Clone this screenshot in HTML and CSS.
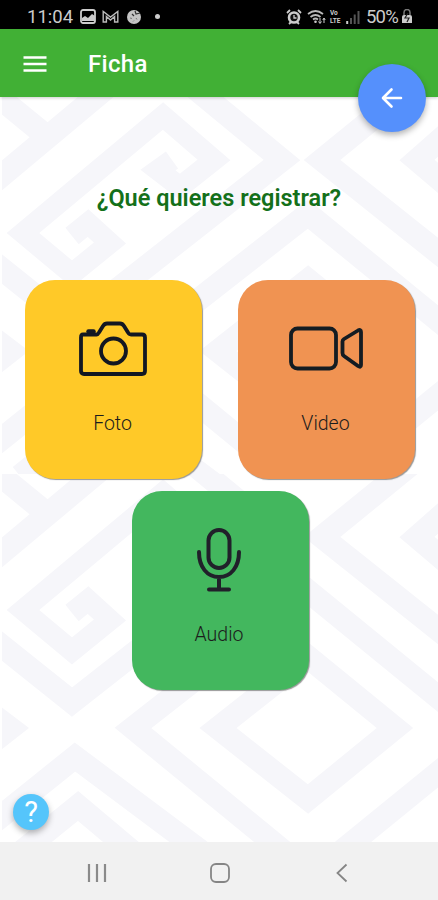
FILE: index.html
```
<!DOCTYPE html>
<html lang="es">
<head>
  <meta charset="UTF-8" />
  <meta name="viewport" content="width=device-width, initial-scale=1.0" />
  <title>Ficha</title>
  <link rel="stylesheet" href="styles.css">
</head>
<body>
  <div class="status-bar">
    <div class="status-left">
      <span class="clock">11:04</span>
      <svg class="st-image" width="16" height="15" viewBox="0 0 16 15">
        <rect x="1" y="1" width="14" height="13" rx="2" fill="none" stroke="#ccc" stroke-width="1.8"/>
        <path d="M2 12V9l3-2 3 2 4-4 3 2v5z" fill="#ccc"/>
      </svg>
      <svg class="st-mail" width="17" height="13" viewBox="0 0 17 13">
        <path d="M1.2 12V1.5L8.5 7l7.3-5.5V12h-3.2V6.5L8.5 10 4.4 6.500V12z" fill="none" stroke="#bbb" stroke-width="1.4"/>
      </svg>
      <svg class="st-ball" width="16" height="16" viewBox="0 0 16 16">
        <circle cx="8" cy="8" r="7" fill="#c4c4c4"/>
        <path d="M6 5l2 2M9 2l1 3 4-1" stroke="#333" stroke-width="1.200" fill="none"/>
        <path d="M4 9l2 .5M10 9l1 1.500M7 12.500l1-1" stroke="#777" stroke-width="1" fill="none"/>
      </svg>
      <span class="dot"></span>
    </div>
    <div class="status-right">
      <svg width="16" height="16" viewBox="0 0 16 16">
        <path d="M1 4l3-3M15 4l-3-3M3 15l2-2M13 15l-2-2" stroke="#ccc" stroke-width="1.8"/>
        <circle cx="8" cy="8.500" r="5" fill="#111" stroke="#ccc" stroke-width="2.600"/>
        <path d="M8 6v3h2.500" fill="none" stroke="#ccc" stroke-width="1.300"/>
      </svg>
      <svg class="st-wifi" width="19" height="16" viewBox="0 0 19 16">
        <path d="M1 5q7.500-6 15 0M3.500 8q5-4 10 0M6 10.500q2.500-2 5 0" fill="none" stroke="#bbb" stroke-width="1.700"/>
        <circle cx="8.500" cy="12.700" r="1.300" fill="#ccc"/>
        <path d="M13 9v5M11.500 12.500l1.500 2 1.500-2M17 14V9.500M15.800 11l1.200-2 1.200 2" fill="none" stroke="#ccc"/>
      </svg>
      <span class="lte"><b>Vo</b><b>LTE</b></span>
      <svg class="st-signal" width="14" height="14" viewBox="0 0 14 14">
        <path d="M1.200 14v-3" stroke="#ccc" stroke-width="2"/>
        <path d="M5 14V8M8.700 14V4.500M12.500 14V1" stroke="#555" stroke-width="2"/>
      </svg>
      <span class="percent">50%</span>
      <svg width="12" height="15" viewBox="0 0 12 15">
        <path d="M3 6V3.500a3 3 0 0 1 6 0V6" fill="none" stroke="#777" stroke-width="1.500"/>
        <path d="M1 14V8q0-2 2-2h6q2 0 2 2v6z" fill="#ccc"/>
        <path d="M7 4L4 9h4l-2 4" fill="none" stroke="#222" stroke-width="1.200"/>
      </svg>
    </div>
  </div>

  <header class="toolbar">
    <svg class="menu" width="24" height="16" viewBox="0 0 24 16">
      <path d="M0.500 1.500h23M0.500 8h23M0.500 14.500h23" stroke="#fff" stroke-width="2.400"/>
    </svg>
    <h1>Ficha</h1>
    <button class="back">
      <svg width="22" height="22" viewBox="0 0 22 22">
        <path d="M20 11H2.500M10.500 2.500L2 11l8.500 8.500" fill="none" stroke="#fff" stroke-width="2.600" stroke-linejoin="round" stroke-linecap="round"/>
      </svg>
    </button>
  </header>

  <main class="content">
    <svg class="greca" width="438" height="745">
      <defs>
        <pattern id="tile" width="438" height="377" patternUnits="userSpaceOnUse">
          <g transform="translate(0 -97)" fill="none" stroke="#f6f6fa" stroke-width="23">
            <path d="M-10 90L45 135"/>
            <path d="M-12 187L110 85"/>
            <path d="M72 236L88 223L110 243L72 274L23 233L163 116L214 160L180 187L158 170L172 160" stroke-width="21"/>
            <path d="M180 76L282 160L72 325L-12 258"/>
            <path d="M430 72L322 160L450 262"/>
            <path d="M450 131L417 160L450 188"/>
            <path d="M310 496L133 351L308 214L450 330"/>
            <path d="M308 280L218 351L308 422L395 351z"/>
            <path d="M-12 320L29 351L-12 383z" fill="#f6f6fa" stroke="none"/>
            <path d="M-12 450L75 380L226 493"/>
            <path d="M20 476L78 429L140 481"/>
            <path d="M450 386L310 500"/>
          </g>
        </pattern>
      </defs>
      <rect x="2" width="436" height="745" fill="url(#tile)"/>
    </svg>

    <h2>¿Qué quieres registrar?</h2>

    <div class="options">
      <div class="card foto">
        <svg width="70" height="58" viewBox="0 0 70 58">
          <path d="M5 14.500H18.500Q20 14.500 21 12.500L25 6Q26.500 3.500 29 3.500H42Q44.500 3.500 46 6L50 12.500Q51 14.500 53 14.500H64Q67 14.500 67 17.500V51Q67 54 64 54H6Q3 54 3 51V17.500Q3 14.500 5 14.500z" fill="none" stroke="#131722" stroke-width="3.800"/>
          <path d="M10.500 11.500h5" stroke="#131722" stroke-width="4.500" stroke-linecap="round"/>
          <circle cx="35.500" cy="31" r="12.500" fill="none" stroke="#131722" stroke-width="3.800"/>
        </svg>
        <span>Foto</span>
      </div>
      <div class="card video">
        <svg width="76" height="58" viewBox="0 0 76 58">
          <g fill="none" stroke="#141c22" stroke-width="3.800" stroke-linejoin="round">
            <rect x="3" y="8.500" width="45" height="40" rx="6.500"/>
            <path d="M54.500 21.500Q54.500 20 56 19L70 10.500Q73 9 73 12V45Q73 48 70 46L56 36Q54.500 35 54.500 33z"/>
          </g>
        </svg>
        <span>Video</span>
      </div>
      <div class="card audio">
        <svg width="46" height="65" viewBox="0 0 46 65">
          <g fill="none" stroke="#21202a" stroke-width="4" stroke-linecap="round">
            <rect x="12.500" y="3" width="21" height="38" rx="10.500"/>
            <path d="M3 25C3 40 11 50 23 50S43 40 43 25M23 50V62M13 62.500H33"/>
          </g>
        </svg>
        <span>Audio</span>
      </div>
    </div>

    <button class="help">?</button>
  </main>

  <nav class="nav-bar">
    <svg width="20" height="20" viewBox="0 0 20 20">
      <path d="M2 1v18M10 1v18M18 1v18" stroke="#8a8a8a" stroke-width="2.200"/>
    </svg>
    <svg width="20" height="20" viewBox="0 0 20 20">
      <rect x="1" y="1" width="18" height="18" rx="5" fill="none" stroke="#858585" stroke-width="1.800"/>
    </svg>
    <svg width="20" height="20" viewBox="0 0 20 20">
      <path d="M14.500 1.500L5.500 10l9 8.500" fill="none" stroke="#858585" stroke-width="1.800"/>
    </svg>
  </nav>
</body>
</html>
```
FILE: styles.css
```
:root {
  --green: #41b035;
  --yellow: #ffc928;
  --orange: #f09352;
  --audio: #43b75e;
}

* {
  box-sizing: border-box;
}

body {
  margin: 0;
  height: 900px;
  display: flex;
  flex-direction: column;
  overflow: hidden;
  font-family: Roboto, "Liberation Sans", sans-serif;
  background-color: #fff;
}

.status-bar {
  height: 29px;
  flex-shrink: 0;
  padding: 4px 25px 0 27px;
  display: flex;
  justify-content: space-between;
  background-color: #000;
  color: #ccc;
}

.status-left,
.status-right {
  display: flex;
  align-items: center;
}

.clock {
  width: 46px;
  font-size: 18.5px;
}

.st-image {
  margin-left: 7px;
}

.st-mail {
  margin-left: 6px;
}

.st-ball {
  margin-left: 7px;
}

.dot {
  width: 5px;
  height: 5px;
  margin-left: 13px;
  border-radius: 50%;
  background-color: #ccc;
}

.st-wifi {
  margin-left: 5px;
}

.lte {
  width: 13px;
  margin-left: 4px;
  display: flex;
  flex-direction: column;
  font-size: 6.5px;
  line-height: 8px;
}

.st-signal {
  margin-left: 3px;
}

.percent {
  width: 34px;
  margin: 0 1px 0 6px;
  font-size: 18.5px;
  letter-spacing: -0.8px;
}

.toolbar {
  position: relative;
  z-index: 1;
  height: 68px;
  flex-shrink: 0;
  padding: 2px 0 0 23px;
  display: flex;
  align-items: center;
  background-color: var(--green);
  box-shadow: 0 1px 3px rgba(0, 0, 0, 0.2);
}

.toolbar h1 {
  margin: 0 0 0 41px;
  font-size: 24px;
  font-weight: 500;
  letter-spacing: 0.3px;
  color: #fff;
}

.back {
  position: absolute;
  top: 35px;
  right: 12px;
  width: 68px;
  height: 68px;
  padding: 0;
  display: flex;
  align-items: center;
  justify-content: center;
  border: none;
  border-radius: 50%;
  background-color: #5590fc;
  box-shadow: 0 3px 6px rgba(0, 0, 0, 0.3);
}

.content {
  position: relative;
  flex: 1;
  min-height: 0;
}

/* fondo de grecas */
.greca {
  position: absolute;
  top: 0;
  left: 0;
  z-index: -1;
}

.content h2 {
  margin: 0;
  padding-top: 87px;
  font-size: 23.5px;
  line-height: 28px;
  font-weight: 600;
  text-align: center;
  color: #14701a;
}

.options {
  margin-top: 68px;
  padding: 0 23px 0 25px;
  display: flex;
  flex-wrap: wrap;
  justify-content: center;
  gap: 12px 36px;
}

.card {
  width: 177px;
  height: 199px;
  padding-right: 2px;
  display: flex;
  flex-direction: column;
  align-items: center;
  border-radius: 30px;
  box-shadow: 1px 1px 1px #979797;
  font-size: 19.5px;
  font-weight: 300;
  color: #1c1c1c;
}

.card svg {
  margin-top: 40px;
}

.card span {
  margin-top: 34px;
  line-height: 24px;
}

.foto {
  background-color: var(--yellow);
}

.video {
  background-color: var(--orange);
}

.audio {
  background-color: var(--audio);
}

.card.audio svg {
  margin-top: 36px;
}

.card.audio span {
  margin-top: 31px;
}

.help {
  position: absolute;
  left: 13px;
  bottom: 12px;
  width: 36px;
  height: 36px;
  padding: 0;
  border: none;
  border-radius: 50%;
  background-color: #55c5fb;
  box-shadow: 0 3px 6px rgba(0, 0, 0, 0.3);
  font-family: Roboto, sans-serif;
  font-size: 29px;
  line-height: 36px;
  color: #fff;
}

.nav-bar {
  height: 58px;
  flex-shrink: 0;
  padding: 3px 86px 0 87px;
  display: flex;
  align-items: center;
  justify-content: space-between;
  background-color: #f1f1f1;
}
```
